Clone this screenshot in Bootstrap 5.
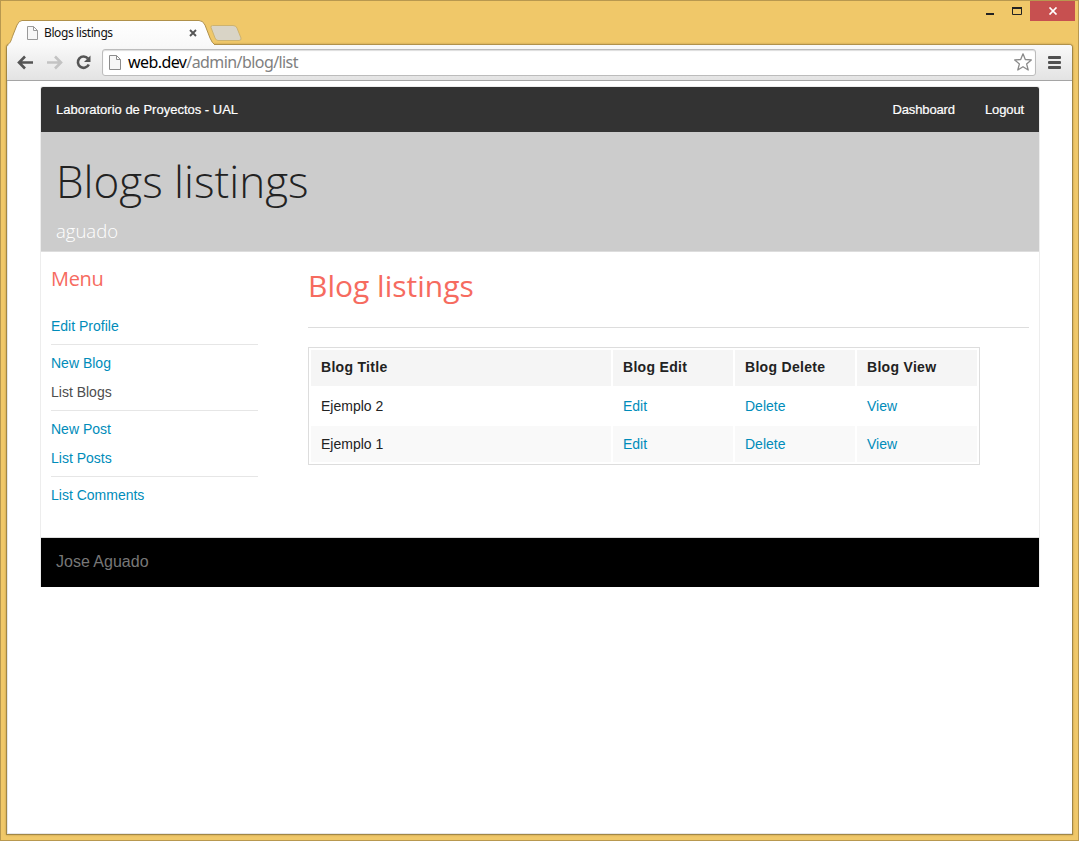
<!DOCTYPE html>
<html lang="es">
<head>
<meta charset="utf-8">
<meta name="viewport" content="width=device-width, initial-scale=1">
<title>Blogs listings</title>
<link href="https://cdn.jsdelivr.net/npm/bootstrap@5.3.0/dist/css/bootstrap.min.css" rel="stylesheet">
<style>
  html, body { height: 100%; }
  body { overflow: hidden; font-family: "Liberation Sans", Arial, sans-serif; font-size: 14px; color: #222; background: #f0c869; }
  a { color: #008cba; text-decoration: none; }
  svg { display: block; flex: none; }
  .window-frame { height: 841px; border: 1px solid #b8984f; padding: 0 5px 4px; }
  .tab-strip { height: 43px; margin: 0 -5px; }
  .tab-shape { width: 206px; height: 26px; margin: 18px 0 -1px 6px; z-index: 2; }
  .tab-shape > .tab-outline { position: absolute; left: 0; top: 0; }
  .tab-icon { margin: 2px 0 0 18px; }
  .tab-label { font: 12px/16px "Noto Sans", sans-serif; color: #111; letter-spacing: -.4px; padding-top: 2px; margin-left: 3px; }
  .tab-close { margin: 2px 16px 0 auto; }
  .win-close { width: 45px; height: 20px; margin-right: -1px; background: #c75050; }
  .win-body { height: 791px; border: 1px solid #a08645; border-top-color: #b0914b; border-radius: 4px 4px 0 0; box-shadow: 0 0 2px #b08f45, inset 0 -1px #e6e6e8, inset 1px 0 #e6e6e8; background: #fff; }
  .tool-row { height: 36px; border-bottom: 1px solid #a5a5a5; border-radius: 3px 3px 0 0; background: linear-gradient(#f9f9f9, #e3e3e3); }
  .address { width: 934px; height: 27px; border: 1px solid #bcbcbc; border-radius: 3px; box-shadow: inset 0 1px 1px #ddd; }
  .address-text { font: 16px/20px "Noto Sans", sans-serif; color: #808080; letter-spacing: -.58px; padding-bottom: 1px; margin-left: 6px; }
  .site { width: 1000px; margin: 5px 0 0 33px; border: 1px solid #ededed; border-bottom: 0; border-radius: 3px 3px 0 0; }
  .site-nav { height: 45px; background: #333; font-size: 13px; border-radius: 2px 2px 0 0; -webkit-text-stroke: .2px #fff; }
  .site-nav a { color: #fff; }
  .site-nav .nav-pair { gap: 30px; margin-right: 15px; letter-spacing: -.12px; }
  .hero { height: 120px; background: #ccc; border-bottom: 1px solid #ddd; font-family: "Open Sans", sans-serif; font-weight: 300; }
  .hero h1 { font-size: 44px; line-height: 62px; font-weight: 300; color: #222; padding: 18px 0 0 15px; }
  .hero p { font-size: 18.5px; line-height: 26px; color: #fff; padding: 6px 0 0 15px; }
  .site-main { height: 286px; border-bottom: 1px solid #ddd; }
  .side { width: 217px; padding: 12px 0 0 10px; }
  .side h2, .listing h2 { font-family: "Open Sans", sans-serif; font-weight: 400; color: #f66b5f; }
  .side h2 { font-size: 20px; line-height: 30px; margin-bottom: 17px; letter-spacing: -.35px; }
  .side li { line-height: 29px; }
  .side li a { position: relative; top: 1px; }
  .side li.rule { height: 1px; margin: 4px 0 3px; background: #e6e6e6; }
  .side .current { color: #4d4d4d; }
  .listing { width: 721px; margin-left: 50px; padding-top: 13px; }
  .listing h2 { font-size: 30px; line-height: 42px; margin-bottom: 20px; }
  .listing hr { margin: 0 0 19px; border-color: #ddd; opacity: 1; }
  .listing table { width: 672px; table-layout: fixed; border: 1px solid #ddd; border-collapse: separate; border-spacing: 2px; }
  .listing th, .listing td { height: 36px; padding: 0 10px; line-height: 18px; }
  .listing th { background: #f5f5f5; letter-spacing: .3px; padding-bottom: 2px; }
  .listing tbody tr:nth-child(even) td { background: #f9f9f9; }
  .site-foot { height: 49px; background: #000; color: #777; font-size: 16px; line-height: 47px; padding-left: 15px; }
</style>
</head>
<body>
<div class="window-frame">
  <div class="tab-strip d-flex align-items-start">
    <div class="tab-shape position-relative d-flex align-items-center">
      <svg class="tab-outline" width="208" height="26" viewBox="0 0 208 26">
        <defs><linearGradient id="tg" x2="0" y2="1"><stop stop-color="#fff"/><stop offset="1" stop-color="#f9f9f9"/></linearGradient></defs>
        <path d="M0 26C4 24 4 21 6 16L10 6Q12 1.500 15 1.500H192Q196 1.500 198 6L203 19Q205 24 208 26" fill="url(#tg)" stroke="#b0914b"/>
      </svg>
      <svg class="tab-icon position-relative" width="16" height="15" viewBox="0 0 16 15" fill="#f7f7f7" stroke="#999"><path d="M2.500 .5H8.500L12.500 4.500V13.500H2.500ZM8.500 .5V4.500H12.500"/></svg>
      <span class="tab-label position-relative">Blogs listings</span>
      <svg class="tab-close position-relative" width="8" height="8" viewBox="0 0 8 8" stroke="#555" stroke-width="1.900"><path d="M1 1 7 7M7 1 1 7"/></svg>
    </div>
    <svg style="margin:23px 0 0 -4px" width="34" height="18" viewBox="0 0 34 18"><path d="M3.500 1.500H24Q27 1.500 28 4L32 14Q32.500 16.500 30 16.500H9Q7 16.500 6 14L2 3.500Q1.500 1.500 3.500 1.500Z" fill="#d9d4c6" stroke="#cdb36f"/></svg>
    <div class="d-flex ms-auto me-1">
      <svg width="45" height="20" viewBox="0 0 45 20"><path d="M1 12H9V14H1Z" fill="#222"/><path d="M27.500 7.500H36.500V13.500H27.500Z" fill="none" stroke="#222"/><path d="M27 7H37" stroke="#222" stroke-width="2"/></svg>
      <div class="win-close d-flex align-items-center justify-content-center">
        <svg width="10" height="8" viewBox="0 0 10 8" stroke="#fff" stroke-width="1.700"><path d="M1.500 .5 8.500 7.500M8.500 .5 1.500 7.500"/></svg>
      </div>
    </div>
  </div>

  <div class="win-body">
    <div class="tool-row d-flex align-items-center">
      <svg width="95" height="36" viewBox="0 0 95 36" fill="none" stroke-width="2.600">
        <path d="M11.500 17.500H26M18 11.500 12 17.500 18 23.500" stroke="#555"/>
        <path d="M40 17.500H54M48 11.500 54 17.500 48 23.500" stroke="#c3c3c3"/>
        <path d="M81 13.500A5.700 5.700 0 1 0 81.800 19.500" stroke="#555"/><path d="M83.500 10.500V17H77Z" fill="#555"/>
      </svg>
      <div class="address d-flex align-items-center bg-white">
        <svg style="margin-left:5px" width="14" height="17" viewBox="0 0 14 17" fill="#f7f7f7" stroke="#8c8c8c"><path d="M1.500 1.500H8.500L12.500 5.500V15.500H1.500ZM8.500 1.500V5.500H12.500"/></svg>
        <span class="address-text"><span class="text-black">web.dev</span>/admin/blog/list</span>
        <svg style="margin:0 3px 1px auto" width="18" height="18" viewBox="0 0 18 18" fill="#fff" stroke="#8a8a8a" stroke-width="1.300" stroke-linejoin="round"><path d="M9 .8 11.300 6.500 17.300 6.900 12.600 10.900 14.200 17 9 13.700 3.800 17 5.400 10.900 .7 6.900 6.700 6.500Z"/></svg>
      </div>
      <svg style="margin-left:12px" width="13" height="14" viewBox="0 0 13 14" fill="#505050"><rect width="13" height="3" rx="1"/><rect y="5" width="13" height="3" rx="1"/><rect y="10" width="13" height="3" rx="1"/></svg>
    </div>

    <div class="site">
      <nav class="site-nav d-flex align-items-center justify-content-between">
        <a href="#" style="margin-left:15px">Laboratorio de Proyectos - UAL</a>
        <div class="nav-pair d-flex"><a href="#">Dashboard</a><a href="#">Logout</a></div>
      </nav>
      <header class="hero">
        <h1 class="mb-0">Blogs listings</h1>
        <p class="mb-0">aguado</p>
      </header>
      <main class="site-main d-flex">
        <aside class="side">
          <h2>Menu</h2>
          <ul class="list-unstyled mb-0">
            <li><a href="#">Edit Profile</a></li>
            <li class="rule"></li>
            <li><a href="#">New Blog</a></li>
            <li><a href="#" class="current">List Blogs</a></li>
            <li class="rule"></li>
            <li><a href="#">New Post</a></li>
            <li><a href="#">List Posts</a></li>
            <li class="rule"></li>
            <li><a href="#">List Comments</a></li>
          </ul>
        </aside>
        <section class="listing">
          <h2>Blog listings</h2>
          <hr>
          <table>
            <colgroup><col style="width:300px"><col style="width:120px"><col style="width:120px"><col style="width:120px"></colgroup>
            <thead><tr><th>Blog Title</th><th>Blog Edit</th><th>Blog Delete</th><th>Blog View</th></tr></thead>
            <tbody>
              <tr><td>Ejemplo 2</td><td><a href="#">Edit</a></td><td><a href="#">Delete</a></td><td><a href="#">View</a></td></tr>
              <tr><td>Ejemplo 1</td><td><a href="#">Edit</a></td><td><a href="#">Delete</a></td><td><a href="#">View</a></td></tr>
            </tbody>
          </table>
        </section>
      </main>
      <footer class="site-foot">Jose Aguado</footer>
    </div>
  </div>
</div>
<script src="https://cdn.jsdelivr.net/npm/bootstrap@5.3.0/dist/js/bootstrap.bundle.min.js"></script>
</body>
</html>
